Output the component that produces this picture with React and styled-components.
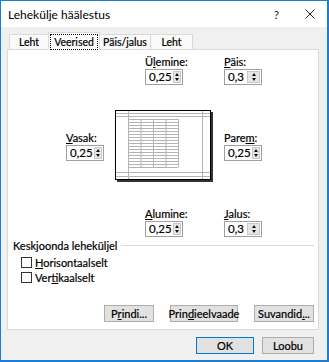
import React from 'react';
import styled, { createGlobalStyle } from 'styled-components';

const GlobalStyle = createGlobalStyle`
  body {
    margin: 0;
    background: #ffffff;
  }
`;

const Dialog = styled.div`
  width: 329px;
  height: 362px;
  box-sizing: border-box;
  border: 1px solid #1a7fd4;
  border-right-width: 2px;
  border-bottom-width: 2px;
  display: flex;
  flex-direction: column;
  font-family: Lato, "Noto Sans", sans-serif;
  font-size: 11px;
  -webkit-text-stroke: 0.2px #000;
  color: #000;
  background: #f0f0f0;
`;

const TitleBar = styled.div`
  height: 26px;
  background: #ffffff;
  display: flex;
  align-items: center;
  padding-left: 7px;
  padding-right: 12px;
  -webkit-text-stroke: 0;
`;

const Title = styled.div`
  flex: 1;
  font-size: 12px;
`;

const HelpMark = styled.span`
  font-size: 12px;
  margin-right: 26px;
  color: #222;
`;

const Body = styled.div`
  flex: 1;
  display: flex;
  flex-direction: column;
  padding: 5px 8px 0 6px;
`;

const TabRow = styled.div`
  display: flex;
  align-items: flex-end;
  padding-left: 3px;
  position: relative;
  z-index: 1;
`;

const Tab = styled.div`
  width: ${p => p.$w}px;
  height: ${p => (p.$active ? 18 : 16)}px;
  box-sizing: border-box;
  border: 1px solid #d9d9d9;
  border-bottom: ${p => (p.$active ? '1px solid #ffffff' : '1px solid #d9d9d9')};
  margin-left: -1px;
  background: ${p => (p.$active ? '#ffffff' : '#fafafa')};
  display: flex;
  align-items: center;
  justify-content: center;
  margin-bottom: -1px;
  padding-top: ${p => (p.$active ? 1 : 0)}px;
  font-size: 10.5px;
  white-space: nowrap;
`;

const FocusText = styled.span`
  outline: 1px dotted #000;
  outline-offset: 1px;
  padding: 0 2px;
  line-height: 12px;
`;

const Panel = styled.div`
  height: 281px;
  box-sizing: border-box;
  background: #ffffff;
  border: 1px solid #d9d9d9;
  display: flex;
  flex-direction: column;
  padding: 5px 4px 7px 0;
`;

const MarginGrid = styled.div`
  display: grid;
  grid-template-columns: 38px 98px 38px;
  column-gap: 11px;
  row-gap: 25px;
  padding-left: 58px;
  align-items: center;
`;

const Field = styled.div`
  display: flex;
  flex-direction: column;
  gap: 1px;
  margin-left: ${p => p.$offset || 0}px;
  grid-column: ${p => p.$col};
`;

const Label = styled.div`
  line-height: 13px;
  white-space: nowrap;
`;

const Key = styled.span`
  text-decoration: underline;
`;

const Spin = styled.div`
  width: 38px;
  height: 16px;
  box-sizing: border-box;
  border: 1px solid #a0a0a0;
  display: flex;
  align-items: stretch;
  background: #fff;
`;

const SpinValue = styled.div`
  flex: 1;
  padding-left: 3px;
  line-height: 14px;
  font-size: 11.5px;
`;

const SpinButtons = styled.div`
  width: 11px;
  margin: 1px;
  display: flex;
  flex-direction: column;
  border: 1px solid #c8c8c8;
  background: #e6e6e6;
`;

const SpinHalf = styled.div`
  flex: 1;
  display: flex;
  align-items: center;
  justify-content: center;
`;

const Arrow = styled.div`
  width: 0;
  height: 0;
  border-left: 2.5px solid transparent;
  border-right: 2.5px solid transparent;
  ${p => (p.$up ? 'border-bottom: 3px solid #111;' : 'border-top: 3px solid #111;')}
`;

const PreviewBox = styled.div`
  grid-column: 2;
  height: 72px;
`;

const GroupHeader = styled.div`
  display: flex;
  align-items: center;
  gap: 4px;
  margin-top: 2px;
  padding-left: 5px;
  line-height: 13px;
  &::after {
    content: '';
    flex: 1;
    height: 1px;
    background: #dcdcdc;
  }
`;

const CheckList = styled.div`
  display: flex;
  flex-direction: column;
  padding-left: 13px;
  margin-top: 4px;
  gap: 2px;
`;

const CheckRow = styled.div`
  display: flex;
  align-items: center;
  gap: 3px;
  line-height: 13px;
`;

const Box = styled.div`
  width: 11px;
  height: 11px;
  box-sizing: border-box;
  border: 1px solid #333;
  background: #fff;
`;

const ButtonRow = styled.div`
  margin-top: auto;
  display: flex;
  justify-content: flex-end;
  gap: ${p => p.$gap}px;
`;

const Button = styled.div`
  width: ${p => p.$w}px;
  height: 17px;
  box-sizing: border-box;
  border: 1px solid ${p => (p.$default ? '#0078d7' : '#adadad')};
  background: #e1e1e1;
  display: flex;
  align-items: center;
  justify-content: center;
  line-height: 13px;
`;

const Footer = styled.div`
  display: flex;
  justify-content: flex-end;
  gap: 8px;
  padding: 7px 5px 0 0;
`;

const Spinner = ({ value }) => (
  <Spin>
    <SpinValue>{value}</SpinValue>
    <SpinButtons>
      <SpinHalf><Arrow $up /></SpinHalf>
      <SpinHalf><Arrow /></SpinHalf>
    </SpinButtons>
  </Spin>
);

const CloseIcon = () => (
  <svg width="10" height="10" viewBox="0 0 10 10">
    <path d="M0.5 0.5 L9.5 9.5 M9.5 0.5 L0.5 9.5" stroke="#222" strokeWidth="1" fill="none" />
  </svg>
);

const PagePreview = () => {
  const rows = [];
  for (let y = 9; y <= 57; y += 3) rows.push(y);
  const cols = [13, 25.5, 38, 50.5, 63];
  return (
    <svg width="98" height="72" viewBox="0 0 98 72">
      <rect x="0.5" y="0.5" width="95" height="69" fill="#fff" stroke="#000" />
      <line x1="2" y1="71" x2="97" y2="71" stroke="#333" strokeWidth="2" />
      <line x1="97" y1="2" x2="97" y2="72" stroke="#333" strokeWidth="2" />
      <g stroke="#b4b4b4" strokeWidth="1">
        <line x1="13.5" y1="1" x2="13.5" y2="69" />
        <line x1="87.5" y1="1" x2="87.5" y2="69" />
        <line x1="1" y1="3.5" x2="95" y2="3.5" />
        <line x1="1" y1="6.5" x2="95" y2="6.5" />
        <line x1="1" y1="62.5" x2="95" y2="62.5" />
        <line x1="1" y1="66.5" x2="95" y2="66.5" />
        {rows.map(y => (
          <line key={y} x1="13" y1={y + 0.5} x2="63" y2={y + 0.5} />
        ))}
        {cols.map(x => (
          <line key={x} x1={x + 0.5} y1="9" x2={x + 0.5} y2="57" />
        ))}
      </g>
    </svg>
  );
};

export default function App() {
  return (
    <>
      <GlobalStyle />
      <Dialog>
        <TitleBar>
          <Title>Lehekülje häälestus</Title>
          <HelpMark>?</HelpMark>
          <CloseIcon />
        </TitleBar>
        <Body>
          <TabRow>
            <Tab $w={40}>Leht</Tab>
            <Tab $w={52} $active><FocusText>Veerised</FocusText></Tab>
            <Tab $w={52}>Päis/jalus</Tab>
            <Tab $w={43}>Leht</Tab>
          </TabRow>
          <Panel>
            <MarginGrid>
              <Field $col={2} $offset={30}>
                <Label>Ü<Key>l</Key>emine:</Label>
                <Spinner value="0,25" />
              </Field>
              <Field $col={3}>
                <Label><Key>P</Key>äis:</Label>
                <Spinner value="0,3" />
              </Field>
              <Field $col={1}>
                <Label><Key>V</Key>asak:</Label>
                <Spinner value="0,25" />
              </Field>
              <PreviewBox>
                <PagePreview />
              </PreviewBox>
              <Field $col={3}>
                <Label>Pare<Key>m</Key>:</Label>
                <Spinner value="0,25" />
              </Field>
              <Field $col={2} $offset={30}>
                <Label><Key>A</Key>lumine:</Label>
                <Spinner value="0,25" />
              </Field>
              <Field $col={3}>
                <Label><Key>J</Key>alus:</Label>
                <Spinner value="0,3" />
              </Field>
            </MarginGrid>
            <GroupHeader>Keskjoonda leheküljel</GroupHeader>
            <CheckList>
              <CheckRow><Box /><span><Key>H</Key>orisontaalselt</span></CheckRow>
              <CheckRow><Box /><span>Ver<Key>t</Key>ikaalselt</span></CheckRow>
            </CheckList>
            <ButtonRow $gap={16}>
              <Button $w={50}>P<Key>r</Key>indi...</Button>
              <Button $w={68}>Prin<Key>d</Key>ieelvaade</Button>
              <Button $w={60}>Suvandid<Key>.</Key>..</Button>
            </ButtonRow>
          </Panel>
          <Footer>
            <Button $w={58} $default>OK</Button>
            <Button $w={52}>Loobu</Button>
          </Footer>
        </Body>
      </Dialog>
    </>
  );
}
